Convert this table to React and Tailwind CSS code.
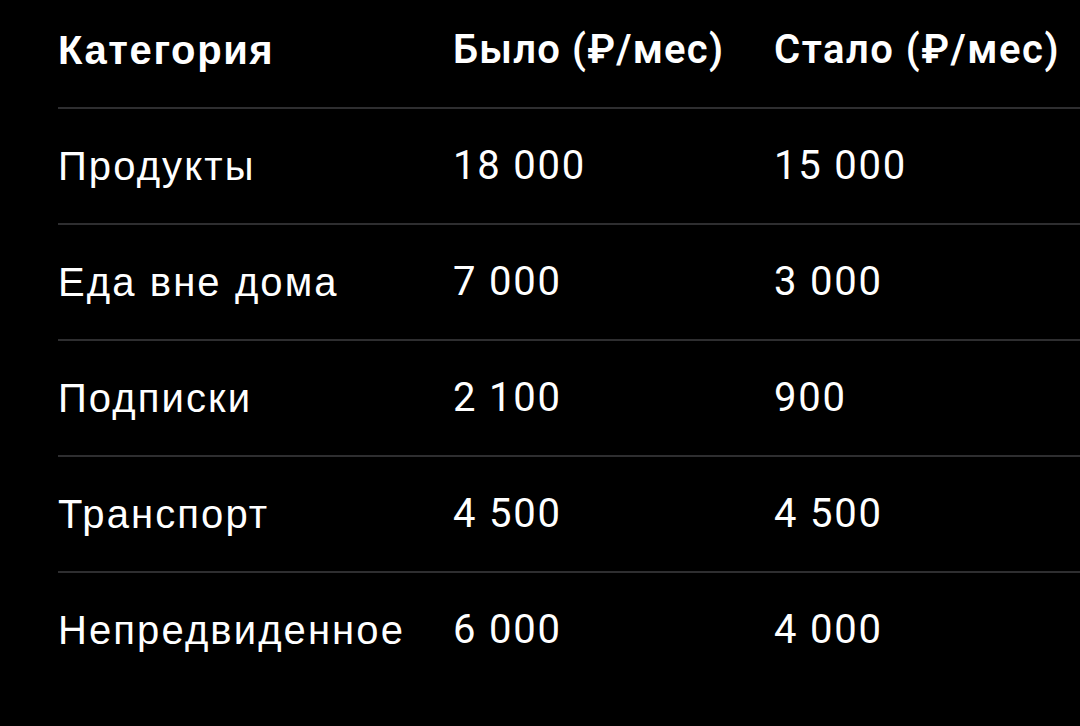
export default function App() {
  const rows = [
    ["Продукты", "18 000", "15 000"],
    ["Еда вне дома", "7 000", "3 000"],
    ["Подписки", "2 100", "900"],
    ["Транспорт", "4 500", "4 500"],
    ["Непредвиденное", "6 000", "4 000"],
  ];
  return (
    <div className="w-[1080px] h-[726px] bg-black overflow-hidden pl-[58px] text-white">
      <div className="w-[1100px]">
        <div className="flex items-center h-[107px] pb-[7px] text-[40px]">
          <div className="w-[395px] font-bold font-[family-name:Liberation_Sans] tracking-[1.6px]">Категория</div>
          <div className="w-[321px] font-semibold font-[family-name:Roboto] tracking-[1.2px]">Было (₽/мес)</div>
          <div className="flex-1 font-semibold font-[family-name:Roboto] tracking-[1.5px]">Стало (₽/мес)</div>
        </div>
        {rows.map((r) => (
          <div key={r[0]} className="flex items-center h-[116px] border-t-2 border-[#2e2e30] text-[40px]">
            <div className="w-[395px] font-[family-name:Liberation_Sans] tracking-[2.1px]">{r[0]}</div>
            <div className="w-[321px] font-[family-name:Roboto] tracking-[1.8px]">{r[1]}</div>
            <div className="flex-1 font-[family-name:Roboto] tracking-[1.8px]">{r[2]}</div>
          </div>
        ))}
      </div>
    </div>
  );
}
